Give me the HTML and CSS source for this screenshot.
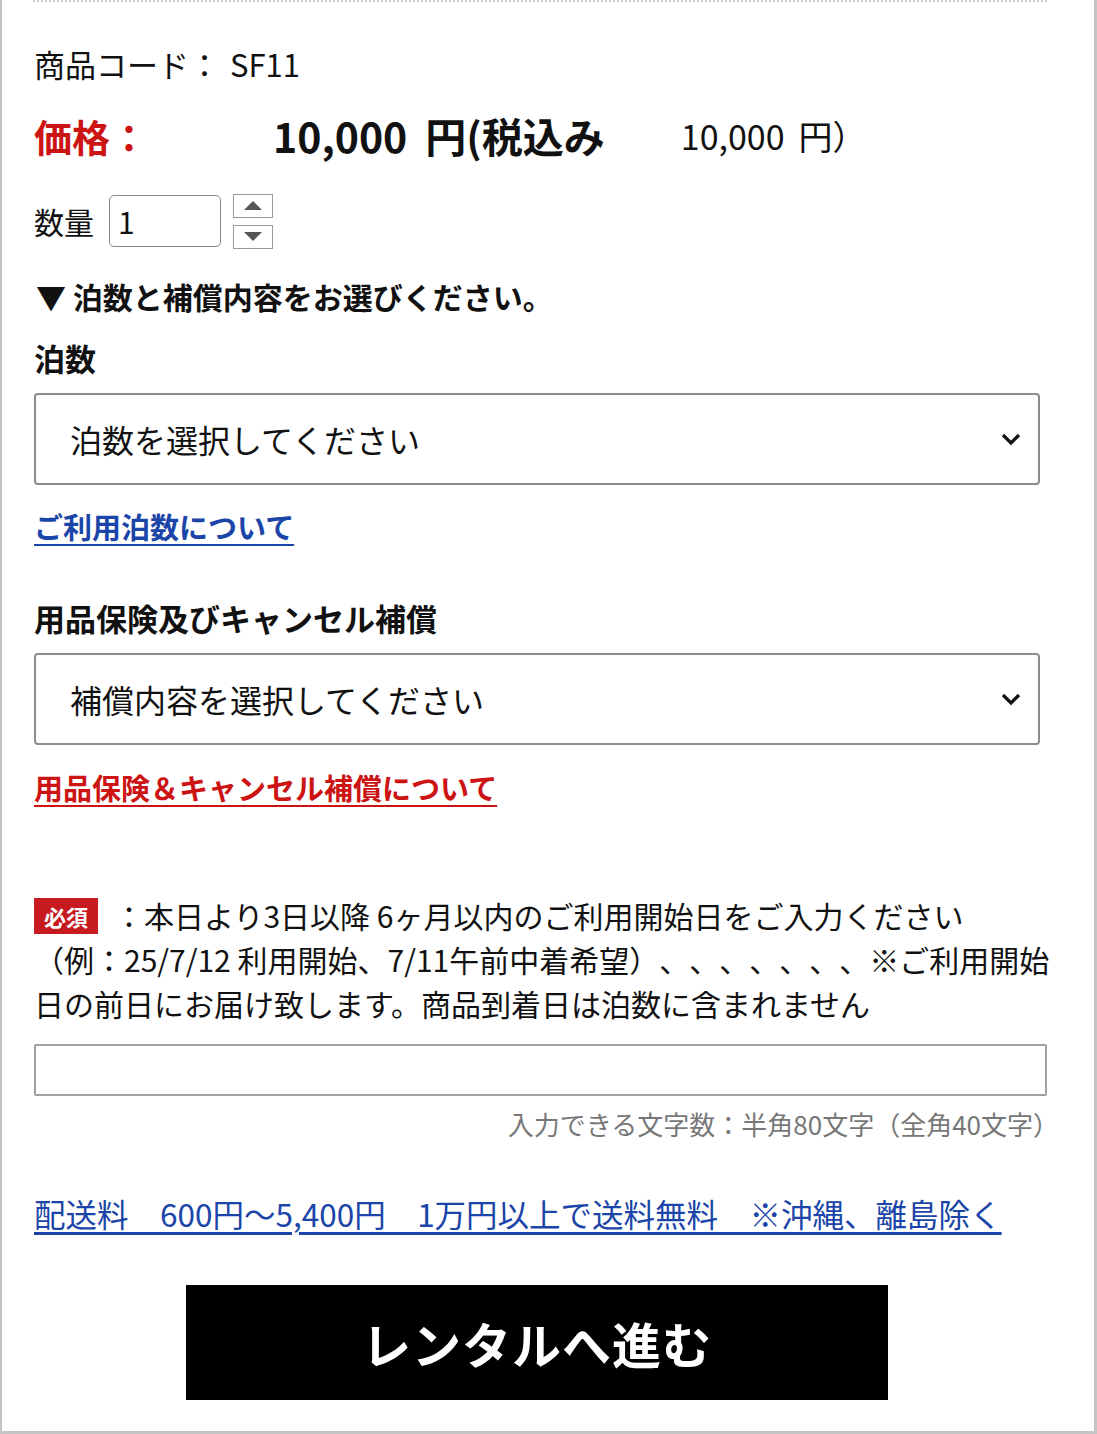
FILE: index.html
```html
<!DOCTYPE html>
<html lang="ja">
<head>
    <meta charset="UTF-8">
    <title>商品詳細 SF11</title>
    <link rel="stylesheet" href="styles.css">
</head>
<body>
    <div class="page">
        <div class="sep"></div>
        <div class="content">
            <p class="code">商品コード： <span class="code-val">SF11</span></p>

            <div class="price">
                <span class="price-label">価格：</span>
                <span class="price-main"><span class="num">10,000</span>円(税込み</span>
                <span class="price-tax"><span class="num">10,000</span>円）</span>
            </div>

            <div class="qty">
                <span class="qty-label">数量</span>
                <input class="qty-input" type="text" value="1">
                <div class="stepper">
                    <button class="step"><span class="tri-up"></span></button>
                    <button class="step"><span class="tri-down"></span></button>
                </div>
            </div>

            <p class="guide">▼ 泊数と補償内容をお選びください。</p>

            <p class="field-title">泊数</p>
            <div class="select">
                <span>泊数を選択してください</span>
                <svg class="chev" width="22" height="14" viewBox="0 0 22 14">
                    <path d="M3 3 L11 11 L19 3" fill="none" stroke="#111" stroke-width="3.2"/>
                </svg>
            </div>
            <a class="link-blue" href="#">ご利用泊数について</a>

            <p class="field-title title-gap">用品保険及びキャンセル補償</p>
            <div class="select">
                <span>補償内容を選択してください</span>
                <svg class="chev" width="22" height="14" viewBox="0 0 22 14">
                    <path d="M3 3 L11 11 L19 3" fill="none" stroke="#111" stroke-width="3.2"/>
                </svg>
            </div>
            <a class="link-red" href="#">用品保険＆キャンセル補償について</a>

            <p class="notice"><span class="badge">必須</span>：本日より3日以降 6ヶ月以内のご利用開始日をご入力ください<br>（例：25/7/12 利用開始、7/11午前中着希望）、、、、、、、※ご利用開始日の前日にお届け致します。商品到着日は泊数に含まれません</p>

            <div class="date-box">
                <input class="date-input" type="text">
                <p class="counter">入力できる文字数：半角80文字（全角40文字）</p>
            </div>

            <a class="ship" href="#">配送料　600円～5,400円　1万円以上で送料無料　※沖縄、離島除く</a>

            <div class="actions">
                <button class="rent">レンタルへ進む</button>
            </div>
        </div>
    </div>
</body>
</html>
```

FILE: styles.css
```css
* { box-sizing: border-box; }
body { margin: 0; background: #fff; font-family: "Noto Sans CJK JP", sans-serif; color: #111; text-spacing-trim: space-all; }
p { margin: 0; }

.page { width: 1097px; height: 1434px; border-left: 2px solid #c4c4c4; border-right: 3px solid #c4c4c4; border-bottom: 3px solid #c4c4c4; }
.sep { height: 2px; margin: 0 47px 0 31px; border-top: 2px dotted #c8c8c8; }
.content { padding: 0 0 0 32px; }

.code { margin-top: 42px; font-size: 31px; line-height: 40px; }
.code-val { margin-left: 3px; }

.price { margin-top: 26px; height: 50px; display: flex; align-items: center; white-space: nowrap; }
.price-label { width: 239px; color: #cc1414; font-weight: 700; font-size: 38px; }
.price-main { font-weight: 700; font-size: 41px; }
.price-tax { margin-left: 76px; font-size: 34px; }
.num { margin-right: 18px; }
.price-tax .num { margin-right: 14px; }

.qty { margin-top: 34px; display: flex; align-items: center; height: 54px; }
.qty-label { font-size: 30px; }
.qty-input { margin-left: 15px; width: 112px; height: 52px; border: 1.5px solid #8a8a8a; border-radius: 5px; padding: 0 8px; font: 30px "Noto Sans CJK JP", sans-serif; color: #111; }
.stepper { margin-left: 12px; display: flex; flex-direction: column; gap: 7px; }
.step { width: 40px; height: 24px; padding: 0; background: #fff; border: 1.5px solid #9a9a9a; display: flex; align-items: center; justify-content: center; }
.tri-up { border-left: 9px solid transparent; border-right: 9px solid transparent; border-bottom: 9px solid #555; }
.tri-down { border-left: 9px solid transparent; border-right: 9px solid transparent; border-top: 9px solid #555; }

.guide { margin-top: 28px; font-size: 30px; line-height: 40px; font-weight: 700; padding-left: 2px; }

.field-title { margin-top: 22px; font-size: 31px; line-height: 40px; font-weight: 700; }
.title-gap { margin-top: 52px; }

.select { margin-top: 15px; width: 1006px; height: 92px; border: 2px solid #8c8c8c; border-radius: 4px; display: flex; align-items: center; justify-content: space-between; padding: 0 16px 0 34px; font-size: 32px; }

.link-blue, .link-red { display: block; width: fit-content; margin-top: 21px; font-size: 29px; line-height: 40px; font-weight: 700; text-decoration: underline; text-underline-offset: 5px; text-decoration-thickness: 2px; }
.link-blue { color: #1b45a8; }
.link-red { color: #cc1414; margin-top: 22px; }

.notice { margin-top: 86px; width: 1030px; font-size: 30px; line-height: 44px; }
.badge { display: inline-block; width: 64px; height: 36px; line-height: 36px; background: #c61a1e; color: #fff; font-size: 22px; font-weight: 700; text-align: center; vertical-align: 2px; margin-right: 16px; }

.date-box { width: 1013px; margin-top: 19px; }
.date-input { display: block; width: 100%; height: 52px; border: 2px solid #a0a0a0; border-radius: 2px; }
.counter { margin: 11px -12px 0 0; text-align: right; font-size: 26px; line-height: 34px; color: #777; }

.ship { display: block; width: fit-content; margin-top: 52px; font-size: 31.5px; line-height: 40px; color: #1b45a8; text-decoration: underline; text-underline-offset: 5px; }

.actions { margin-top: 52px; padding-left: 152px; }
.rent { width: 702px; height: 115px; background: #000; color: #fff; border: none; font-family: "Noto Sans CJK JP", sans-serif; font-size: 49px; font-weight: 700; letter-spacing: 1px; }
```
